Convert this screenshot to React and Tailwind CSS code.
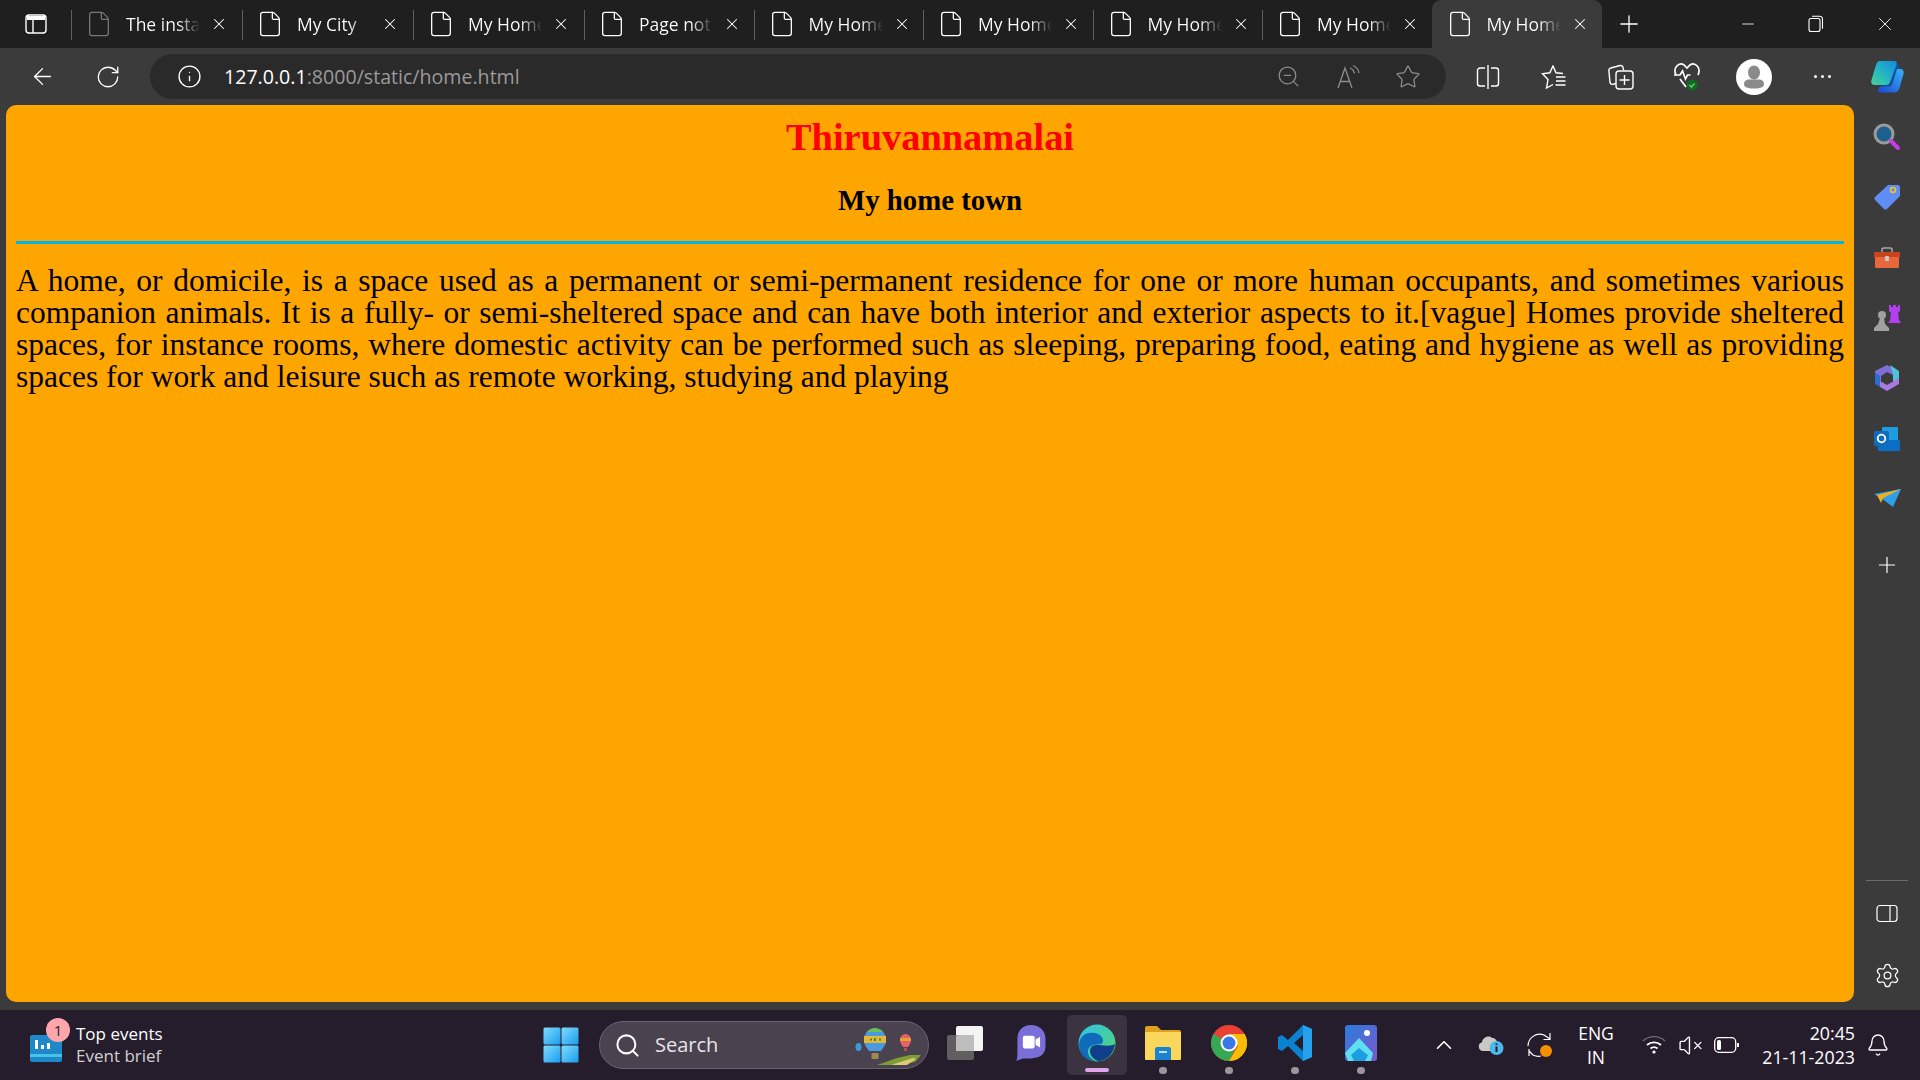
import { ArrowLeft, RotateCw, Info, ZoomOut, Star, Plus, X, Minus, File, Search, Bell, ChevronUp, VolumeX, Settings } from 'lucide-react';

const tabs = [
	{ title: 'The instal', dim: true, w: 'w-[171px]' },
	{ title: 'My City', w: 'w-[171px]' },
	{ title: 'My Home', w: 'w-[171px]' },
	{ title: 'Page not', w: 'w-[169.5px]' },
	{ title: 'My Home', w: 'w-[169.5px]' },
	{ title: 'My Home', w: 'w-[169.5px]' },
	{ title: 'My Home', w: 'w-[169.5px]' },
	{ title: 'My Home', w: 'w-[169.5px]' },
];

function TabContent({ title, dim }) {
	return (
		<>
			<File size={28} strokeWidth={1.1} className={`shrink-0 ${dim ? 'text-[#777]' : 'text-white'}`} />
			<span className="ml-[13px] w-[74px] whitespace-nowrap text-[17.5px] bg-linear-to-r from-white from-70% to-transparent bg-clip-text text-transparent">
				{title}
			</span>
			<X size={18} strokeWidth={1.4} className="ml-[10px] shrink-0 text-white" />
		</>
	);
}

function TabBar() {
	return (
		<div className="flex h-[48px] shrink-0 items-center bg-[#1f1f1f]">
			<div className="flex h-[48px] w-[71px] shrink-0 items-center justify-center">
				<svg width="22" height="22" viewBox="0 0 22 22" className="text-white" fill="none" stroke="currentColor" strokeWidth="1.4">
					<rect x="1" y="2" width="20" height="18" rx="3" />
					<path d="M8 7v13" />
					<path d="M2 3h18v4H2z" fill="currentColor" stroke="none" />
				</svg>
			</div>
			{tabs.map((t, i) => (
				<div key={i} className={`relative flex h-[48px] shrink-0 items-center pl-[14px] ${t.w}`}>
					<span className="absolute left-0 top-[10px] h-[30px] w-[1px] bg-[#5f5f5f]" />
					<TabContent title={t.title} dim={t.dim} />
				</div>
			))}
			<div className="flex h-[48px] w-[170.5px] shrink-0 items-center rounded-t-[9px] bg-[#3b3b3b] pl-[14px]">
				<TabContent title="My Home" />
			</div>
			<div className="flex h-[48px] w-[54px] shrink-0 items-center justify-center">
				<Plus size={28} strokeWidth={1.1} className="text-white" />
			</div>
			<div className="ml-auto flex h-[48px]">
				<div className="flex w-[68px] items-center justify-center"><Minus size={18} strokeWidth={1.1} className="text-white" /></div>
				<div className="flex w-[68px] items-center justify-center">
					<svg width="16" height="18" viewBox="0 0 16 18" fill="none" stroke="white" strokeWidth="1.1">
						<rect x="1" y="3.5" width="11" height="13" rx="2" />
						<path d="M4 1.2h7.5A3 3 0 0 1 14.5 4.2v9.5" />
					</svg>
				</div>
				<div className="flex w-[70px] items-center justify-center"><X size={22} strokeWidth={1} className="text-white" /></div>
			</div>
		</div>
	);
}

function ReadAloud() {
	return (
		<svg width="26" height="26" viewBox="0 0 26 26" fill="none" stroke="#8d8d8d" strokeWidth="1.3">
			<path d="M3 24 10 4l7 20M5.500 17.500h9" />
			<path d="M15 4c2.500 1 4 3 4.500 5.500M18 1.500c3.500 1.500 5.500 4 6 7.500" />
		</svg>
	);
}

function SplitScreen() {
	return (
		<svg width="24" height="26" viewBox="0 0 24 26" fill="none" stroke="white" strokeWidth="1.4">
			<path d="M9 4H4a2.500 2.500 0 0 0-2.500 2.500v13A2.500 2.500 0 0 0 4 22h5M15 4h5a2.500 2.500 0 0 1 2.500 2.500v13A2.500 2.500 0 0 1 20 22h-5" />
			<path d="M12 1v24" />
		</svg>
	);
}

function Favorites() {
	return (
		<svg width="26" height="24" viewBox="0 0 26 24" fill="none" stroke="white" strokeWidth="1.4">
			<path d="M22 8.500 15 7.800 12 1 8.800 7.800 1.500 8.800 7 14.500 5.500 23 12 19.500" />
			<path d="M15 12h9.500M15 16h9.500M14.500 20h10" />
		</svg>
	);
}

function Collections() {
	return (
		<svg width="26" height="28" viewBox="0 0 26 28" fill="none" stroke="white" strokeWidth="1.4">
			<path d="M8 20.500 5 21.300a2.500 2.500 0 0 1-3-1.800L.9 8A2.500 2.500 0 0 1 2.800 5L12 2.500A2.500 2.500 0 0 1 15 4.400l.6 3" />
			<rect x="8" y="8" width="17" height="18" rx="3" />
			<path d="M16.500 12v10M11.500 17h10" />
		</svg>
	);
}

function Health() {
	return (
		<svg width="28" height="30" viewBox="0 0 28 30">
			<path d="M3 13C-.5 6 6-.5 11 3l3 3 3-3c5-3.500 11.500 3 8 10" fill="none" stroke="white" strokeWidth="1.700" />
			<path d="M1 13h6l2.500-4 3 8 2-4h3" fill="none" stroke="white" strokeWidth="1.700" />
			<path d="M7 17l6 8" fill="none" stroke="white" strokeWidth="1.700" />
			<circle cx="19" cy="23" r="5.500" fill="#0f6d1f" />
			<path d="M16.500 23l2 2 3-3.500" fill="none" stroke="#7cc48a" strokeWidth="1.200" />
		</svg>
	);
}

function Avatar() {
	return (
		<svg width="36" height="36" viewBox="0 0 36 36">
			<circle cx="18" cy="18" r="18" fill="white" />
			<ellipse cx="18" cy="13.500" rx="6" ry="7" fill="#8a8a8a" />
			<path d="M8 25c0-3 2-4.500 5-4.500h10c3 0 5 1.500 5 4.500s-3 4.500-10 4.500S8 28 8 25z" fill="#8a8a8a" />
		</svg>
	);
}

function Copilot() {
	return (
		<svg width="33" height="33" viewBox="0 0 33 33">
			<defs>
				<linearGradient id="cpA" x1="0" y1="1" x2="1" y2="0">
					<stop offset="0" stopColor="#45d49a" />
					<stop offset="0.55" stopColor="#1fb0c8" />
					<stop offset="1" stopColor="#1a86e0" />
				</linearGradient>
				<linearGradient id="cpB" x1="0" y1="1" x2="1" y2="0">
					<stop offset="0" stopColor="#1b45d0" />
					<stop offset="1" stopColor="#38b4f6" />
				</linearGradient>
			</defs>
			<path d="M21 8c2-1 4-7 8-1l-6 18c-1 2-3 3-5 3H10z" fill="#10509e" />
			<path d="M26 9h3c3 0 4 2 3.500 5l-4 14c-1 3-3 4.500-6 4.500H9c-2 0-3-1.500-2-3l2-3h9c2 0 3-1 3.500-3z" fill="url(#cpB)" />
			<path d="M9 1h14c3 0 3 2 2.500 4L19 22c-.6 2-2 3-4 3H4c-3 0-4.500-2-3.500-5L5 5C6 2 7 1 9 1z" fill="url(#cpA)" />
		</svg>
	);
}

function Slot({ w, children }) {
	return <div className={`flex h-full shrink-0 items-center justify-center ${w}`}>{children}</div>;
}

function Toolbar() {
	return (
		<div className="flex h-[57px] shrink-0 items-start bg-[#3b3b3b] pl-[9px] pt-[6px]">
			<div className="flex h-[45px]">
				<Slot w="w-[66px]"><ArrowLeft size={27} strokeWidth={1.2} className="text-white" /></Slot>
				<Slot w="w-[66px]"><RotateCw size={26} strokeWidth={1.2} className="text-white" /></Slot>
			</div>
			<div className="ml-[9px] flex h-[45px] w-[1296px] shrink-0 items-center rounded-full bg-[#2a2a2a] pl-[27px] pr-[8px]">
				<Info size={25} strokeWidth={1.3} className="shrink-0 text-white" />
				<span className="ml-[22px] text-[19.6px] text-white">
					127.0.0.1<span className="text-[#9a9a9a]">:8000/static/home.html</span>
				</span>
				<div className="ml-auto flex h-full">
					<Slot w="w-[60px]"><ZoomOut size={25} strokeWidth={1.2} className="text-[#8d8d8d]" /></Slot>
					<Slot w="w-[60px]"><ReadAloud /></Slot>
					<Slot w="w-[60px]"><Star size={26} strokeWidth={1.2} className="text-[#8d8d8d]" /></Slot>
				</div>
			</div>
			<div className="ml-[8px] flex h-[45px]">
				<Slot w="w-[67px]"><SplitScreen /></Slot>
				<Slot w="w-[66px]"><Favorites /></Slot>
				<Slot w="w-[67px]"><Collections /></Slot>
				<Slot w="w-[66px]"><Health /></Slot>
				<Slot w="w-[68px]"><Avatar /></Slot>
				<Slot w="w-[68px]">
					<span className="flex gap-[4px]">
						<i className="h-[3px] w-[3px] rounded-full bg-white" />
						<i className="h-[3px] w-[3px] rounded-full bg-white" />
						<i className="h-[3px] w-[3px] rounded-full bg-white" />
					</span>
				</Slot>
				<Slot w="w-[63px]"><Copilot /></Slot>
			</div>
		</div>
	);
}

function Page() {
	return (
		<main className="ml-[6px] flex-1 rounded-[10px] bg-[#ffa500] px-[10px] text-black font-['Liberation_Serif',serif]">
			<h1 className="mt-[10px] text-center text-[38.4px] font-bold leading-[44px] text-[#ff0000]">Thiruvannamalai</h1>
			<h2 className="mt-[25px] text-center text-[28.8px] font-bold leading-[33px]">My home town</h2>
			<hr className="mt-[24px] h-[3px] border-0 bg-[#00b4e6]" />
			<p className="mt-[21px] text-justify text-[31.5px] leading-[32px]">
				A home, or domicile, is a space used as a permanent or semi-permanent residence for one or more human occupants, and sometimes various companion animals. It is a fully- or semi-sheltered space and can have both interior and exterior aspects to it.[vague] Homes provide sheltered spaces, for instance rooms, where domestic activity can be performed such as sleeping, preparing food, eating and hygiene as well as providing spaces for work and leisure such as remote working, studying and playing
			</p>
		</main>
	);
}

function SearchApp() {
	return (
		<svg width="28" height="28" viewBox="0 0 28 28">
			<circle cx="11" cy="11" r="9" fill="#1d5f8e" stroke="#9a9a9a" strokeWidth="3" />
			<path d="M18 18l7 7" stroke="#c53fe0" strokeWidth="4" strokeLinecap="round" />
		</svg>
	);
}
function Tag() {
	return (
		<svg width="26" height="26" viewBox="0 0 26 26">
			<path d="M14 1h10c1 0 2 1 2 2v9L13 25c-1 .8-2 .8-3 0L1 16c-.8-1-.8-2 0-3z" fill="#5f8cf5" />
			<circle cx="19" cy="6" r="2.500" fill="none" stroke="#f5c518" strokeWidth="1.500" />
		</svg>
	);
}
function Toolbox() {
	return (
		<svg width="28" height="22" viewBox="0 0 28 22">
			<path d="M9 5V2.500C9 1.500 10 1 11 1h6c1 0 2 .5 2 1.500V5" fill="none" stroke="#a9a9a9" strokeWidth="1.500" />
			<rect x="1" y="5" width="26" height="6" rx="1" fill="#c8441b" />
			<rect x="2" y="10" width="24" height="11" rx="1.500" fill="#e8673c" />
			<rect x="12" y="9" width="4" height="5" rx="1" fill="#c9c9c9" />
		</svg>
	);
}
function Games() {
	return (
		<svg width="28" height="28" viewBox="0 0 28 28">
			<path d="M16 1h2v2h2V1h3v2h2V1h2v6l-2 2 1 7 2 3H15l2-3 1-7-2-2z" fill="#b23ff0" />
			<circle cx="9" cy="11" r="4" fill="#a0a0a0" />
			<path d="M7 14h4l1 6 4 4v3H1v-3l4-4z" fill="#a0a0a0" />
		</svg>
	);
}
function Office() {
	return (
		<svg width="26" height="28" viewBox="0 0 26 28">
			<path d="M13 1 24 7v7l-7-4-4-2-6 4v7l-6-3V7z" fill="#7f6fd8" />
			<path d="M16 1l9 6v13l-6-3V10z" fill="#4fc4d8" />
			<path d="M1 8v12l5 3V12z" fill="#2a6fd0" />
			<path d="M6 17l7 4 12-7v6l-12 7-7-4z" fill="#a77ae0" />
		</svg>
	);
}
function Outlook() {
	return (
		<svg width="26" height="26" viewBox="0 0 26 26">
			<rect x="8" y="1" width="16" height="22" rx="1" fill="#1f9de0" />
			<path d="M3 14h23v10a1 1 0 0 1-1 1H4z" fill="#0a6fc4" />
			<rect x="0" y="5" width="15" height="15" rx="1.500" fill="#0f6cbd" />
			<circle cx="7.500" cy="12.500" r="3.800" fill="none" stroke="white" strokeWidth="1.800" />
		</svg>
	);
}
function Drop() {
	return (
		<svg width="27" height="20" viewBox="0 0 27 20">
			<path d="M0 5 27 0 19 18 11 12z" fill="#2f9fe8" />
			<path d="M3 6 27 0 9 9 7 14z" fill="#f2b01e" />
		</svg>
	);
}

const sidebarApps = [SearchApp, Tag, Toolbox, Games, Office, Outlook, Drop];

function Sidebar() {
	return (
		<aside className="flex w-[66px] shrink-0 flex-col items-center">
			<div className="mt-[2px] flex flex-col">
				{sidebarApps.map((Icon, i) => (
					<div key={i} className="flex h-[60.3px] items-center justify-center"><Icon /></div>
				))}
			</div>
			<div className="mt-[6px] flex h-[60px] items-center"><Plus size={26} strokeWidth={1.1} className="text-white" /></div>
			<div className="mt-auto h-[1px] w-[42px] bg-[#6b6b6b]" />
			<div className="mt-[20px] flex h-[26px] items-center">
				<svg width="22" height="20" viewBox="0 0 22 20" fill="none" stroke="white" strokeWidth="1.200">
					<rect x="1" y="1.500" width="20" height="16" rx="3" />
					<path d="M14 1.500v16" />
				</svg>
			</div>
			<div className="mb-[12px] mt-[33px] flex h-[30px] items-center"><Settings size={27} strokeWidth={1.1} className="text-white" /></div>
		</aside>
	);
}

function WidgetIcon() {
	return (
		<svg width="34" height="34" viewBox="0 0 34 34">
			<rect x="1" y="5" width="32" height="27" rx="2" fill="#1f88c8" />
			<rect x="1" y="24" width="32" height="3" fill="#46c3e8" />
			<path d="M6 10h3v9H6zM12 15h3v4h-3zM18 13h3v6h-3z" fill="white" />
		</svg>
	);
}

function Doodle() {
	return (
		<svg width="68" height="42" viewBox="0 0 68 42">
			<ellipse cx="3.500" cy="23" rx="3" ry="4" fill="#3a9ae0" />
			<path d="M9 16a11 12 0 0 1 22 0c0 5-3 8-5 11h-12c-2-3-5-6-5-11z" fill="#4a9ae0" />
			<path d="M12 8a11 12 0 0 1 16 0z" fill="#6cc050" />
			<rect x="9" y="12" width="22" height="7" fill="#e2b838" />
			<path d="M15 15.500h2M20 14v3M24 15.500h2" stroke="#4a8a40" strokeWidth="2" />
			<rect x="16.500" y="29" width="7" height="6" rx="1" fill="#a08a50" />
			<path d="M45 16a5.500 6 0 0 1 11 0c0 3-2 5-3 7h-5c-1-2-3-4-3-7z" fill="#e8606a" />
			<rect x="45" y="14" width="11" height="3" fill="#e8a030" />
			<rect x="49" y="24" width="3" height="3" fill="#b05040" />
			<path d="M22 41l20-7 13-3 11 0-6 7-18 3z" fill="#7d9e32" />
			<path d="M36 41l22-7 3 1-9 6z" fill="#e0c878" />
		</svg>
	);
}

function WinLogo() {
	return (
		<svg width="36" height="36" viewBox="0 0 36 36">
			<defs>
				<linearGradient id="winA" x1="0" y1="0" x2="1" y2="1">
					<stop offset="0" stopColor="#7fdcfb" />
					<stop offset="1" stopColor="#1a9cf0" />
				</linearGradient>
			</defs>
			<rect x="0.500" y="0.500" width="17" height="17" rx="1.500" fill="url(#winA)" />
			<rect x="18.500" y="0.500" width="17" height="17" rx="1.500" fill="url(#winA)" />
			<rect x="0.500" y="18.500" width="17" height="17" rx="1.500" fill="url(#winA)" />
			<rect x="18.500" y="18.500" width="17" height="17" rx="1.500" fill="url(#winA)" />
		</svg>
	);
}

function TaskView() {
	return (
		<svg width="36" height="34" viewBox="0 0 36 34">
			<rect x="9" y="0" width="27" height="25" rx="2" fill="#f4f4f4" />
			<rect x="0" y="9" width="27" height="25" rx="2" fill="#5f5f5f" />
			<path d="M9 11a2 2 0 0 1 2-2h16v16H9z" fill="#bdbdbd" />
		</svg>
	);
}

function Chat() {
	return (
		<svg width="32" height="38" viewBox="0 0 34 42">
			<path d="M17 1c9 0 16 6 16 15v9c0 9-7 13-16 13H8l-7 3c1-4 1-8 1-13V16C2 7 8 1 17 1z" fill="#7a6fd8" />
			<rect x="8" y="13" width="13" height="14" rx="2" fill="white" />
			<path d="M22 17l5-3v12l-5-3z" fill="white" />
		</svg>
	);
}

function Edge() {
	return (
		<svg width="38" height="38" viewBox="0 0 38 38">
			<defs>
				<linearGradient id="edgeA" x1="0" y1="0" x2="1" y2="1">
					<stop offset="0" stopColor="#2fc3e8" />
					<stop offset="1" stopColor="#54d66b" />
				</linearGradient>
			</defs>
			<circle cx="19" cy="19" r="18.500" fill="url(#edgeA)" />
			<path d="M1 21C2 10 10 8 17 9c5 1 8 4 8 8 0 2-1 3-3 3-6 0-13 2-12 9 .4 3 3 6 7 8C8 37 1 30 1 21z" fill="#0f6cbd" />
			<path d="M12 27c0-5 5-7 10-6 6 1 12 1 15-1-1 9-8 17-17 17-5-2-8-6-8-10z" fill="#0f3f8a" />
		</svg>
	);
}

function Explorer() {
	return (
		<svg width="36" height="36" viewBox="0 0 36 36">
			<path d="M0 3a2 2 0 0 1 2-2h10l4 4h18a2 2 0 0 1 2 2v4H0z" fill="#e0a020" />
			<path d="M0 7h36v27a1 1 0 0 1-1 1H1a1 1 0 0 1-1-1z" fill="#fad65a" />
			<path d="M10 24a2 2 0 0 1 2-2h12a2 2 0 0 1 2 2v11H10z" fill="#1a82d0" />
			<rect x="14" y="26" width="8" height="2" fill="#bfe4fa" />
		</svg>
	);
}

function Chrome() {
	return (
		<svg width="36" height="36" viewBox="0 0 36 36">
			<circle cx="18" cy="18" r="18" fill="#e94235" />
			<path d="M18 18 2.500 9A18 18 0 0 0 18 36l9-18z" fill="#34a853" />
			<path d="M18 9h15.600A18 18 0 0 1 18 36l9-15z" fill="#fbbc05" />
			<circle cx="18" cy="18" r="8.500" fill="white" />
			<circle cx="18" cy="18" r="6.500" fill="#3b78e7" />
		</svg>
	);
}

function VSCode() {
	return (
		<svg width="36" height="38" viewBox="0 0 36 38">
			<path d="M26 1l9 4v28l-9 4-15-15-6 5-4-2V13l4-2 6 5zM26 11l-9 8 9 8z" fill="#0a82d0" />
			<path d="M26 1l9 4v28l-9 4z" fill="#24a0ed" />
		</svg>
	);
}

function Photos() {
	return (
		<svg width="32" height="36" viewBox="0 0 32 36">
			<defs>
				<linearGradient id="phA" x1="0" y1="0" x2="1" y2="1">
					<stop offset="0" stopColor="#2a7de0" />
					<stop offset="1" stopColor="#7a58c8" />
				</linearGradient>
			</defs>
			<rect width="32" height="36" rx="3" fill="url(#phA)" />
			<circle cx="22" cy="8" r="3" fill="white" />
			<path d="M0 28 14 13l14 15-2 8H3z" fill="#5fe0f0" />
			<path d="M6 30l8-7 9 7-3 6H9z" fill="#1e9de0" />
		</svg>
	);
}

function OneDriveInfo() {
	return (
		<svg width="26" height="22" viewBox="0 0 26 22">
			<path d="M5 17a4.500 4.500 0 0 1-1-8.800C5 3 11 1 14 4c3 0 5 2 5 5v8z" fill="#c9c9c9" />
			<circle cx="18.500" cy="14" r="7" fill="#4fb8ea" />
			<path d="M18.500 12.500v5.500M18.500 9.500v1.500" stroke="#10202c" strokeWidth="2" />
		</svg>
	);
}

function SyncIcon() {
	return (
		<svg width="26" height="26" viewBox="0 0 26 26" fill="none" stroke="white" strokeWidth="1.200">
			<path d="M1 14C1 6 9 0 17 3l6 4M23 1v6.500h-6.500" />
			<path d="M2 17v7M2 19l4 4c2 1 5 2 8 1" />
			<circle cx="19" cy="19" r="6" fill="#f59000" stroke="none" />
		</svg>
	);
}

function WifiIcon() {
	return (
		<svg width="24" height="20" viewBox="0 0 24 20" fill="none" stroke="white" strokeWidth="1.800">
			<path d="M1 6a16 16 0 0 1 22 0" stroke="#6f6a73" strokeWidth="1.400" />
			<path d="M5 10a10.500 10.500 0 0 1 14 0M8.500 13.500a5.500 5.500 0 0 1 7 0" />
			<circle cx="12" cy="17" r="1.600" fill="white" stroke="none" />
		</svg>
	);
}

function BatteryIcon() {
	return (
		<svg width="25" height="16" viewBox="0 0 25 16" fill="none" stroke="white" strokeWidth="1.300">
			<rect x="0.700" y="0.700" width="21" height="14.600" rx="4" />
			<rect x="3" y="3" width="4" height="10" rx="1.500" fill="white" stroke="none" />
			<path d="M24 6v4" strokeWidth="2" />
		</svg>
	);
}

const taskbarApps = [
	{ Icon: TaskView },
	{ Icon: Chat },
	{ Icon: Edge, active: true },
	{ Icon: Explorer, dot: true },
	{ Icon: Chrome, dot: true },
	{ Icon: VSCode, dot: true },
	{ Icon: Photos, dot: true },
];

function Taskbar() {
	return (
		<div className="flex h-[70px] shrink-0 items-center bg-[#261d2c] text-white font-['Open_Sans',sans-serif]">
			<div className="relative ml-[29px] mt-[4px] flex h-full w-[35px] shrink-0 items-center">
				<WidgetIcon />
				<span className="absolute left-[17px] top-[6px] flex h-[24px] w-[24px] items-center justify-center rounded-full bg-[#ffa6ad] text-[15px] text-[#222]">1</span>
			</div>
			<div className="ml-[12px] flex w-[100px] shrink-0 flex-col whitespace-nowrap text-[17px] leading-[22px]">
				<span>Top events</span>
				<span className="text-[#d0d0d0]">Event brief</span>
			</div>
			<div className="ml-[367px] shrink-0"><WinLogo /></div>
			<div className="ml-[20px] flex h-[48px] w-[330px] shrink-0 items-center rounded-full border border-[#6a6270] bg-[#4b4250] pl-[14px]">
				<Search size={27} strokeWidth={1.8} className="text-white" />
				<span className="ml-[14px] text-[20px] text-[#e6e6e6]">Search</span>
				<div className="ml-auto mr-[5px]"><Doodle /></div>
			</div>
			<div className="ml-[3px] flex h-full">
				{taskbarApps.map(({ Icon, dot, active }, i) => (
					<div key={i} className="relative flex h-full w-[66px] shrink-0 items-center justify-center">
						{active && <div className="absolute inset-x-[3px] top-[5px] bottom-[5px] rounded-[5px] bg-[#3b3340]" />}
						<div className="relative mb-[4px]"><Icon /></div>
						{dot && <span className="absolute bottom-[6px] h-[7px] w-[8px] rounded-full bg-[#9a969c]" />}
						{active && <span className="absolute bottom-[8px] h-[4px] w-[24px] rounded-full bg-[#e0a5ea]" />}
					</div>
				))}
			</div>
			<div className="ml-[26px] flex h-full items-center">
				<Slot w="w-[48px]"><ChevronUp size={26} strokeWidth={1.5} className="text-white" /></Slot>
				<Slot w="w-[46px]"><OneDriveInfo /></Slot>
				<Slot w="w-[52px]"><SyncIcon /></Slot>
				<div className="flex w-[60px] shrink-0 flex-col items-center text-[17.5px] leading-[24px]">
					<span>ENG</span>
					<span>IN</span>
				</div>
				<div className="ml-[6px] flex h-full">
					<Slot w="w-[44px]"><WifiIcon /></Slot>
					<Slot w="w-[28px]"><VolumeX size={25} strokeWidth={1.3} className="text-white" /></Slot>
					<Slot w="w-[44px]"><BatteryIcon /></Slot>
				</div>
				<div className="ml-[7px] flex w-[100px] shrink-0 flex-col items-end whitespace-nowrap text-[17.8px] leading-[24px]">
					<span>20:45</span>
					<span>21-11-2023</span>
				</div>
				<Slot w="w-[46px]"><Bell size={24} strokeWidth={1.3} className="text-white" /></Slot>
			</div>
		</div>
	);
}

export default function App() {
	return (
		<div className="flex h-screen w-screen flex-col overflow-hidden bg-[#3b3b3b] font-['Open_Sans',sans-serif] text-white">
			<TabBar />
			<Toolbar />
			<div className="flex min-h-0 flex-1 pb-[8px]">
				<Page />
				<Sidebar />
			</div>
			<Taskbar />
		</div>
	);
}
